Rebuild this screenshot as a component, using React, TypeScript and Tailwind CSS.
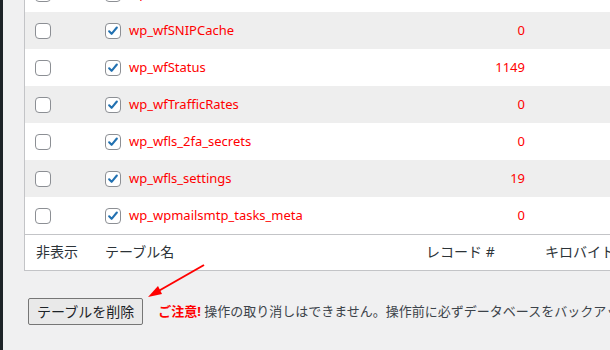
const rows = [
  { name: "wp_wfSNIPCache", count: "0" },
  { name: "wp_wfSNIPCache", count: "0" },
  { name: "wp_wfStatus", count: "1149" },
  { name: "wp_wfTrafficRates", count: "0" },
  { name: "wp_wfls_2fa_secrets", count: "0" },
  { name: "wp_wfls_settings", count: "19" },
  { name: "wp_wpmailsmtp_tasks_meta", count: "0" },
];

function Box({ checked }: { checked?: boolean }) {
  return (
    <span className="flex h-4 w-4 shrink-0 items-center justify-center rounded-[4px] border border-[#8c8f94] bg-white">
      {checked && (
        <svg width="14" height="14" viewBox="0 0 20 20">
          <path
            d="M4.5 10.5l3.5 3.5l7.5-9"
            fill="none"
            stroke="#2271b1"
            strokeWidth="3"
            strokeLinecap="round"
            strokeLinejoin="round"
          />
        </svg>
      )}
    </span>
  );
}

export default function App() {
  return (
    <div
      className="flex h-[350px] w-[610px] overflow-hidden bg-[#f0f0f1] text-[13px] text-[#3c434a]"
      style={{ fontFamily: '"Noto Sans", "Noto Sans CJK JP", sans-serif' }}
    >
      <div className="w-[3px] shrink-0 bg-[#1d2327]" />
      <div className="relative flex-1 pl-[21px]">
        <div className="mt-[-26px] w-[700px] border border-[#c3c4c7] bg-white">
          {rows.map((r, i) => (
            <div
              key={i}
              className={`flex h-[37px] items-center ${i % 2 === 1 ? "bg-[#eeeeee]" : "bg-white"}`}
            >
              <div className="w-[70px] pl-[10px]">
                <Box />
              </div>
              <div className="flex w-[321px] items-center gap-2 pl-[10px] text-[#ff0000]">
                <Box checked />
                <span>{r.name}</span>
              </div>
              <div className="w-[119px] pr-[10px] text-right text-[#ff0000]">{r.count}</div>
              <div className="flex-1" />
            </div>
          ))}
          <div className="flex h-[36px] items-center border-t border-[#c3c4c7] pb-[2px] text-[14px] text-[#2c3338]">
            <div className="w-[70px] pl-[11px]">非表示</div>
            <div className="w-[321px] pl-[10px]">テーブル名</div>
            <div className="w-[119px] pl-[10px]">レコード #</div>
            <div className="pl-[10px]">キロバイト</div>
          </div>
        </div>

        <div className="mt-[27px] flex items-center pl-[4px]">
          <button className="h-[27px] rounded-[2px] border border-[#767676] bg-[#e9e9e9] px-[8px] text-[14px] text-[#1d2327]">
            テーブルを削除
          </button>
          <span className="ml-[15px] whitespace-nowrap">
            <b className="font-bold text-[#ff0000]">ご注意!</b>{" "}
            操作の取り消しはできません。操作前に必ずデータベースをバックアップしてください。
          </span>
        </div>

        <svg
          className="absolute left-[118px] top-[262px]"
          width="90"
          height="40"
          viewBox="0 0 90 40"
        >
          <line x1="83" y1="3" x2="34" y2="31" stroke="#ff0000" strokeWidth="2" />
          <polygon points="27,35 37,24 41,32" fill="#ff0000" />
        </svg>
      </div>
    </div>
  );
}
